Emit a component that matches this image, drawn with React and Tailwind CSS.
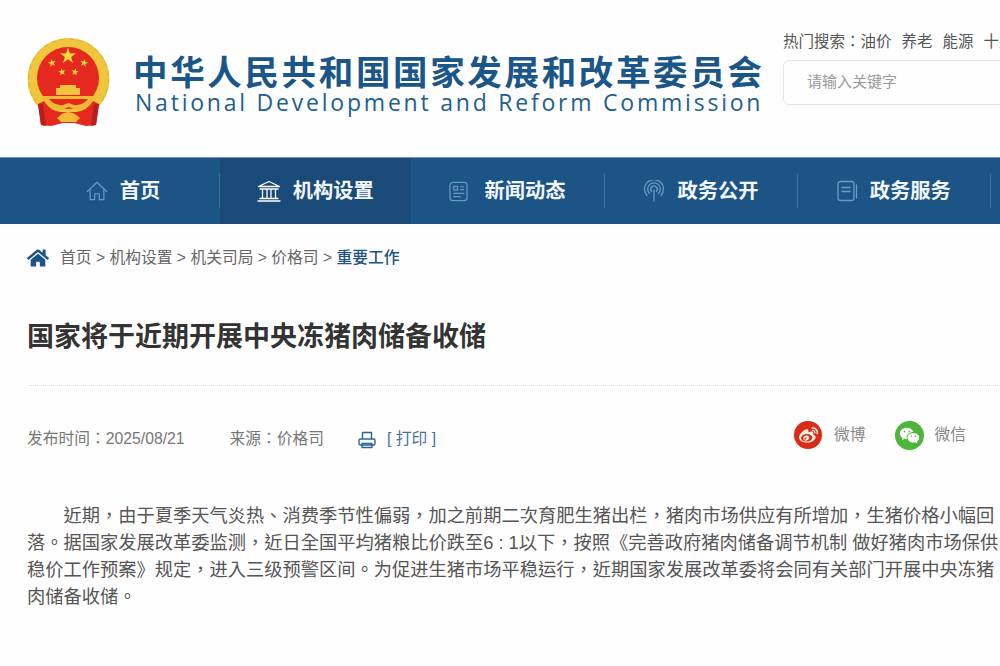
import { RiWechatFill } from 'react-icons/ri'
import { FaHome, FaWeibo } from 'react-icons/fa'

const cjk = { fontFamily: '"Liberation Sans", "Noto Sans CJK SC", sans-serif' }
// the page's commas and colons sit centred in their cell, as the TC cut draws them
const centredPunct = "font-['Liberation_Sans','Noto_Sans_CJK_TC',sans-serif]"

function starPoints(cx, cy, r, rot = 0) {
  const pts = []
  for (let i = 0; i < 10; i++) {
    const rad = i % 2 === 0 ? r : r * 0.38
    const a = ((-90 + rot + i * 36) * Math.PI) / 180
    pts.push(`${(cx + rad * Math.cos(a)).toFixed(2)},${(cy + rad * Math.sin(a)).toFixed(2)}`)
  }
  return pts.join(' ')
}

function Emblem() {
  return (
    <svg width="84" height="90" viewBox="0 0 84 90" className="shrink-0">
      {/* wheat ring */}
      <circle cx="41.5" cy="41" r="41" fill="#f0c63c" />
      <circle cx="41.5" cy="41" r="40" fill="none" stroke="#dfae35" strokeWidth="1" strokeDasharray="5 4" />
      {/* red disc */}
      <circle cx="41" cy="40" r="31" fill="#e5291f" />
      {/* stars */}
      <polygon points={starPoints(41, 18, 8.5)} fill="#fbdc3c" />
      <polygon points={starPoints(25, 25, 4.2, -15)} fill="#fbdc3c" />
      <polygon points={starPoints(57, 25, 4.2, 15)} fill="#fbdc3c" />
      <polygon points={starPoints(35, 34, 3.8, -10)} fill="#fbdc3c" />
      <polygon points={starPoints(48, 34, 3.8, 10)} fill="#fbdc3c" />
      {/* gate */}
      <path d="M33 47h16v3h4v7H29v-7h4z" fill="#f3c53f" />
      {/* gold band */}
      <path d="M15 58h53l-3 5q-6 9-15 9l-8-3-8 3q-10 0-16-9z" fill="#f2b935" />
      <path d="M22 61h39l-3 3q-5 4-11 3l-5.500-2-5.500 2q-6 1-11-3z" fill="#e5291f" />
      {/* ribbon */}
      <path d="M11 66l6-3q6 10 17 11h15q11-1 17-11l6 3-3 21-10 1-12-3H36l-12 3-10-1z" fill="#e5291f" />
      <path d="M30 80q6-6 11-6 6 0 12 6l-4 4H34z" fill="#f2b935" />
      <path d="M11 66l3 21 5 1-3-22z" fill="#b81f1c" />
      <path d="M72 66l-3 21-5 1 3-22z" fill="#b81f1c" />
    </svg>
  )
}

const iconProps = { fill: 'none', stroke: 'currentColor', strokeWidth: 1.3, strokeLinecap: 'round', strokeLinejoin: 'round' }

function HomeIcon() {
  return (
    <svg width="22" height="22" viewBox="0 0 24 22" {...iconProps}>
      <path d="M1.500 11.500 12 1.500l10.500 10" />
      <path d="M4.500 9.500V20.500h5v-6.500h5v6.500h5V9.500" />
    </svg>
  )
}

function BankIcon() {
  return (
    <svg width="24" height="22" viewBox="0 0 24 22" {...iconProps}>
      <path d="M1.500 6.500 12 1.500l10.500 5z" />
      <path d="M3 9h18M5.500 9v9M10 9v9M14 9v9M18.500 9v9M3 18.500h18M1 21h22" />
    </svg>
  )
}

function NewsIcon() {
  return (
    <svg width="19" height="21" viewBox="0 0 20 22" {...iconProps}>
      <rect x="1" y="1.500" width="18" height="19" rx="3" />
      <path d="M5 5.500h4v4H5zM12 6h3.500M12 9h3.500M5 13h10.500M5 16.500h7" />
    </svg>
  )
}

function SignalIcon() {
  return (
    <svg width="22" height="22" viewBox="0 0 22 22" {...iconProps}>
      <path d="M4 15.500a9.500 9.500 0 1 1 14 0" />
      <path d="M6.500 13.500a6.300 6.300 0 1 1 9 0" />
      <path d="M8.700 11.500a3.200 3.200 0 1 1 4.600 0" />
      <path d="M11 10v11" />
    </svg>
  )
}

function BookIcon() {
  return (
    <svg width="21" height="22" viewBox="0 0 21 22" {...iconProps}>
      <rect x="1" y="1.500" width="16" height="19" rx="2.500" />
      <path d="M5 7.500h8M5 11.500h8M19.500 5v13" />
    </svg>
  )
}

function PrinterIcon() {
  return (
    <svg width="18" height="18" viewBox="0 0 18 18" fill="none" stroke="#2f6596" strokeWidth="1.400" strokeLinejoin="round">
      <path d="M4.500 8V1.500h9V8" />
      <rect x="1" y="8" width="16" height="6" rx="1.500" />
      <path d="M4 12.500v4h10v-4z" />
    </svg>
  )
}

const navItems = [
  { label: '首页', Icon: HomeIcon, width: 'w-[192.800px]', gap: 'gap-3', divider: true },
  { label: '机构设置', Icon: BankIcon, width: 'w-[191px]', gap: 'gap-3', active: true },
  { label: '新闻动态', Icon: NewsIcon, width: 'w-[194.200px]', gap: 'gap-4', divider: true },
  { label: '政务公开', Icon: SignalIcon, width: 'w-[192.800px]', gap: 'gap-3', divider: true },
  { label: '政务服务', Icon: BookIcon, width: 'w-[192.800px]', gap: 'gap-3', divider: true },
]

const body1 = '近期，由于夏季天气炎热、消费季节性偏弱，加之前期二次育肥生猪出栏，猪肉市场供应有所增加，生猪价格小幅回落。据国家发展改革委监测，近日全国平均猪粮比价跌至6 : 1以下，按照《完善政府猪肉储备调节机制 做好猪肉市场保供稳价工作预案》规定，进入三级预警区间。为促进生猪市场平稳运行，近期国家发展改革委将会同有关部门开展中央冻猪肉储备收储。'

export default function App() {
  return (
    <div className="w-[1000px] h-[666px] overflow-hidden bg-[#fefefe]" style={cjk}>
      {/* header */}
      <header className="h-[157px] flex pl-[27px]">
        <div className="pt-[38px]">
          <Emblem />
        </div>
        <div className="w-[628px] ml-[22px] pt-[55px] shrink-0">
          <div className="text-[34.500px] leading-[36px] font-bold tracking-[2.650px] whitespace-nowrap text-[#1b5688]">
            中华人民共和国国家发展和改革委员会
          </div>
          <div className="ml-0.5 text-[23px] leading-[22px] tracking-[2.780px] whitespace-nowrap text-[#23608f]" style={{ fontFamily: '"Open Sans", sans-serif' }}>
            National Development and Reform Commission
          </div>
        </div>
        <div className="ml-[22px] w-[300px] shrink-0 pt-[31px]">
          <div className={`flex gap-2.5 text-[15.500px] leading-[22px] text-[#555] whitespace-nowrap ${centredPunct}`}>
            <span>热门搜索：油价</span>
            <span>养老</span>
            <span>能源</span>
            <span>十九大</span>
          </div>
          <div className="mt-[7px] h-[45px] flex items-center pl-[23px] border border-[#e6e6e6] rounded-md text-[15px] text-[#999]">
            请输入关键字
          </div>
        </div>
      </header>

      {/* nav */}
      <nav className="h-[67px] bg-[#1c5485] flex pl-[27px] border-t border-[#6f9cc4]">
        {navItems.map(({ label, Icon, active, width, gap, divider }) => (
          <div key={label} className={`${width} shrink-0 flex items-center ${active ? 'bg-[#194a78]' : ''}`}>
            <div className={`flex-1 flex items-center justify-center ${gap} ${active ? 'text-white' : 'text-[#6d9ac3]'}`}>
              <Icon />
              <span className="text-[20.250px] font-bold text-[#f2f6fa]">{label}</span>
            </div>
            {divider && <div className="w-px h-[34px] bg-[#3f74a3]" />}
          </div>
        ))}
      </nav>

      <main className="pl-[27px]">
        {/* breadcrumb */}
        <div className="h-[24px] mt-[22px] flex items-center whitespace-nowrap text-[15.750px] text-[#666]">
          <FaHome className="w-[22px] h-[20px] text-[#1c5485] mr-[11px]" />
          <span>首页 &gt; 机构设置 &gt; 机关司局 &gt; 价格司 &gt;&nbsp;</span>
          <span className="text-[#1c5485] font-medium">重要工作</span>
        </div>

        <h1 className="mt-[48px] text-[27px] leading-[38px] font-bold text-[#333]">
          国家将于近期开展中央冻猪肉储备收储
        </h1>

        <div className="mt-[29px] border-t border-dotted border-[#ddd]" />

        {/* meta row */}
        <div className="mt-[34px] h-[30px] flex items-center text-[15.750px] text-[#777] whitespace-nowrap">
          <span className={`mt-2 ${centredPunct}`}>发布时间：2025/08/21</span>
          <span className={`ml-[45px] mt-2 ${centredPunct}`}>来源：价格司</span>
          <span className="ml-[34px] mt-[9px]"><PrinterIcon /></span>
          <span className="ml-[11px] mt-2 text-[#4a7198]">[ 打印 ]</span>
          <div className="ml-auto mr-[34px] flex shrink-0 items-center text-[#888]">
            <span className="w-[28px] h-[28px] rounded-full bg-[#db2a18] flex items-center justify-center">
              <FaWeibo className="w-[19px] h-[19px] text-[#fff4e6]" />
            </span>
            <span className="ml-3">微博</span>
            <span className="ml-[29px] w-[29px] h-[29px] rounded-full bg-[#4cb53a] flex items-center justify-center">
              <RiWechatFill className="w-[21px] h-[21px] text-white" />
            </span>
            <span className="ml-[11px]">微信</span>
          </div>
        </div>

        {/* article */}
        <p className={`mt-[52px] w-[973px] text-[18.250px] leading-[27px] indent-[36.500px] text-[#555] ${centredPunct}`}>{body1}</p>
      </main>
    </div>
  )
}
